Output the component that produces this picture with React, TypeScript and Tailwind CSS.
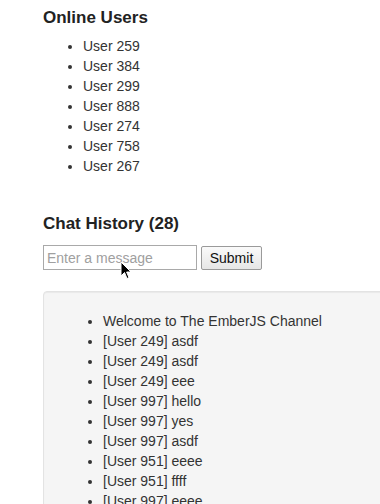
import React from "react";

const users = ["User 259", "User 384", "User 299", "User 888", "User 274", "User 758", "User 267"];
const messages = [
  "Welcome to The EmberJS Channel",
  "[User 249] asdf",
  "[User 249] asdf",
  "[User 249] eee",
  "[User 997] hello",
  "[User 997] yes",
  "[User 997] asdf",
  "[User 951] eeee",
  "[User 951] ffff",
  "[User 997] eeee",
  "[User 997] hi",
  "[User 951] test",
];

export default function App() {
  return (
    <div
      className="relative w-[380px] h-[504px] overflow-hidden bg-white text-[#333] text-[14px] leading-[20px]"
      style={{ fontFamily: '"Liberation Sans", Arial, sans-serif' }}
    >
      <div className="pl-[43px] pt-[8px]">
        <h3 className="text-[17px] leading-[19px] font-bold text-[#222]">Online Users</h3>
        <ul className="mt-[9px] pl-[40px] list-disc">
          {users.map((u) => (
            <li key={u}>{u}</li>
          ))}
        </ul>
        <h3 className="mt-[38px] text-[17px] leading-[19px] font-bold text-[#222]">Chat History (28)</h3>
        <div className="mt-[12px] flex items-start gap-[4px]">
          <input
            className="w-[154px] h-[25px] border border-[#a9a9a9] px-[3px] text-[14px] text-[#333] placeholder:text-[#a0a0a0] outline-none"
            placeholder="Enter a message"
          />
          <button className="mt-[1px] w-[61px] h-[24px] border border-[#9a9a9a] rounded-[2px] bg-gradient-to-b from-[#fafafa] to-[#e6e6e6] text-[14px] leading-[20px] text-[#111]">
            Submit
          </button>
        </div>
        <div className="mt-[21px] w-[400px] bg-[#f5f5f5] border border-[#e3e3e3] rounded-[4px] p-[19px] shadow-[inset_0_1px_1px_rgba(0,0,0,0.05)]">
          <ul className="pl-[40px] list-disc">
            {messages.map((m, i) => (
              <li key={i}>{m}</li>
            ))}
          </ul>
        </div>
      </div>
      <svg className="absolute left-[120px] top-[261px]" width="12" height="19" viewBox="0 0 12 19">
        <path d="M1 1 L1 15 L4.5 11.5 L7 17.5 L9 16.6 L6.6 11 L11 11 Z" fill="#000" stroke="#fff" strokeWidth="1" strokeLinejoin="round" />
      </svg>
    </div>
  );
}
